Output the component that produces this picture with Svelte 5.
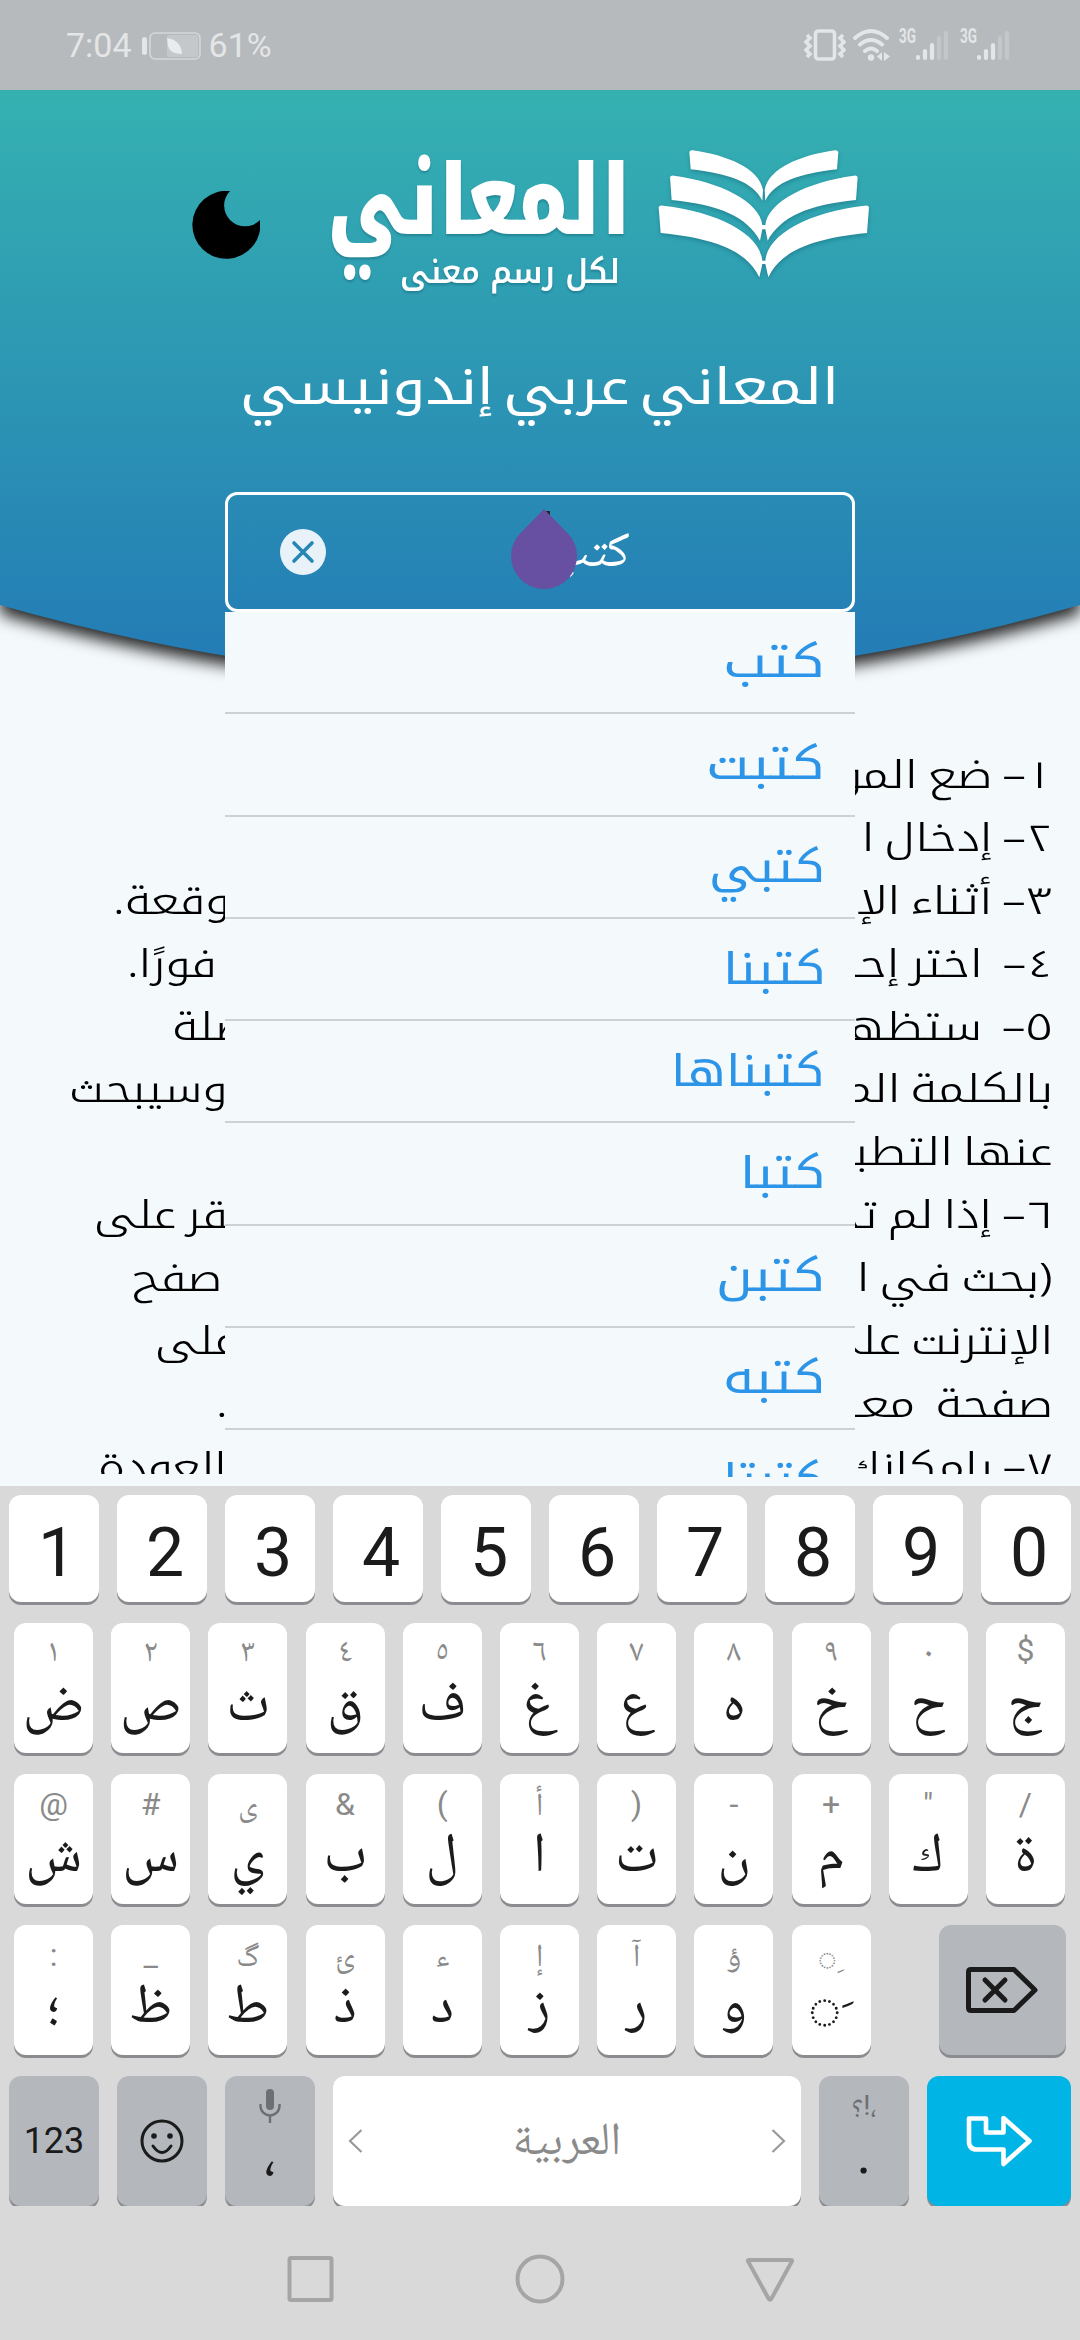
<script>
  const suggestions = [
    { word: 'كتب', width: 102 },
    { word: 'كتبت', width: 119 },
    { word: 'كتبي', width: 116 },
    { word: 'كتبنا', width: 102 },
    { word: 'كتبناها', width: 154 },
    { word: 'كتبا', width: 85 },
    { word: 'كتبن', width: 109 },
    { word: 'كتبه', width: 102 },
    { word: 'كتبتا', width: 102 },
  ];

  // start and end of each help line, the suggestions cover the middle
  const tips = [
    { start: '١– ضع المؤ' },
    { start: '٢– إدخال ا' },
    { start: '٣– أثناء الإد', end: 'وقعة.', left: 113 },
    { start: '٤–  اختر إحد', end: 'فورًا.', left: 127 },
    { start: '٥–  ستظهر', end: 'صلة', left: 172 },
    { start: 'بالكلمة المر', end: 'وسيبحث', left: 69 },
    { start: 'عنها التطبيق' },
    { start: '٦– إذا لم تجد', end: 'نقر على', left: 94 },
    { start: '(بحث في ا', end: 'صفح', left: 132 },
    { start: 'الإنترنت على', end: 'على', left: 155 },
    { start: 'صفحة  معا', end: '.', left: 216 },
    { start: '٧– بإمكانك', end: 'العودة', left: 98 },
  ];

  const digits = ['1', '2', '3', '4', '5', '6', '7', '8', '9', '0'];

  const rows = [
    [['١', 'ض'], ['٢', 'ص'], ['٣', 'ث'], ['٤', 'ق'], ['٥', 'ف'], ['٦', 'غ'], ['٧', 'ع'], ['٨', 'ە'], ['٩', 'خ'], ['٠', 'ح'], ['$', 'ج']],
    [['@', 'ش'], ['#', 'س'], ['ى', 'ي'], ['&', 'ب'], ['(', 'ل'], ['أ', 'ا'], [')', 'ت'], ['-', 'ن'], ['+', 'م'], ['"', 'ك'], ['/', 'ة']],
    [[':', '؛'], ['_', 'ظ'], ['گ', 'ط'], ['ئ', 'ذ'], ['ء', 'د'], ['إ', 'ز'], ['آ', 'ر'], ['ؤ', 'و']],
  ];

  // stretch a word to the given width
  function fit(node, width) {
    node.style.transform = `scaleX(${width / node.offsetWidth})`;
  }
</script>

{#snippet signal()}
  <svg class="signal" width="52" height="36" viewBox="0 0 52 36">
    <text x="0" y="16" font-size="20" font-weight="700" textLength="17" lengthAdjust="spacingAndGlyphs">3G</text>
    <g stroke-width="4.2" stroke-linecap="round">
      <path d="M19 30v1M26 24v7M33 18v13" />
      <path d="M40 11v20M47 6v25" opacity=".3" />
    </g>
  </svg>
{/snippet}

<div class="screen">
  <div class="status">
    <span>7:04</span>
    <svg class="battery" width="60" height="30" viewBox="0 0 60 30">
      <rect x="0" y="6" width="5" height="18" rx="2.5" fill="#e3e5e7" />
      <rect x="8" y="2" width="50" height="26" rx="5" fill="none" stroke="#d5d8da" stroke-width="1.6" />
      <rect x="25" y="4" width="31" height="22" rx="2" fill="#c4c8cb" />
      <path d="M25 7q14 2 15 16q-12 0-14-8z" fill="#e9ebec" />
    </svg>
    <span class="percent">61%</span>
    <div class="grow"></div>
    <svg class="vibrate" width="42" height="34" viewBox="0 0 42 34" fill="none" stroke="#e3e5e7">
      <rect x="11.500" y="3" width="19" height="28" rx="3" stroke-width="3.600" />
      <path d="M3 7l3 3-4 4 4 4-4 4 4 4-3 3M39 7l-3 3 4 4-4 4 4 4-4 4 3 3" stroke-width="3.600" />
    </svg>
    <svg class="wifi" width="38" height="34" viewBox="0 0 38 34" fill="none" stroke="#e3e5e7" stroke-width="4" stroke-linecap="round">
      <path d="M2 10q16-14 32 0M7 16.500q11-9 22 0M12 23q6-5 12 0" />
      <circle cx="18" cy="29.500" r="3.200" fill="#e3e5e7" stroke="none" />
      <path d="M29 24v9l-5-4.500zM31 24v9l6-4.500z" fill="#e3e5e7" stroke="none" />
    </svg>
    {@render signal()}
    {@render signal()}
  </div>

  <header>
    <svg class="backdrop" width="1080" height="620" viewBox="0 0 1080 620">
      <defs>
        <linearGradient id="sea" x1="0" y1="0" x2="0" y2="1">
          <stop offset="0" stop-color="#35b1b1" />
          <stop offset="1" stop-color="#237ab6" />
        </linearGradient>
      </defs>
      <path d="M0 0H1080V515Q540 669 0 515Z" fill="url(#sea)" />
    </svg>

    <div class="brand">
      <svg class="moon" width="68" height="68" viewBox="0 0 68 68">
        <path d="M38 0A34 34 0 1 0 68 29A20.500 20.500 0 0 1 38 0Z" />
      </svg>
      <svg class="wordmark" width="300" height="160" viewBox="0 0 300 160" fill="#fff" direction="rtl">
        <text x="303" y="94" font-size="97" font-weight="900" textLength="304" lengthAdjust="spacingAndGlyphs">المعاني</text>
        <text x="292" y="143" font-size="33" font-weight="600" textLength="220" lengthAdjust="spacingAndGlyphs">لكل رسم معنى</text>
      </svg>
      <svg class="book" width="250" height="170" viewBox="0 0 750 510" fill="#fff">
        <path id="half" d="M148 66Q150 60 158 61C260 75 358 115 369 180L367 212C340 155 260 130 152 118ZM90 142Q92 135 102 137C240 155 360 215 367 285H372V298H367L360 332C320 260 240 225 95 210ZM56 232Q58 224 70 227C230 245 360 310 367 392H372V402H367L358 442C320 360 220 325 62 309Z" />
        <use href="#half" transform="matrix(-1 0 0 1 743 0)" />
      </svg>
    </div>

    <h1><span use:fit={599}>المعاني عربي إندونيسي</span></h1>

    <div class="search">
      <svg class="clear" width="46" height="46" viewBox="0 0 46 46">
        <circle cx="23" cy="23" r="23" fill="#e9f2f9" />
        <path d="M14 14L32 32M32 14L14 32" stroke="#2787b4" stroke-width="3.600" stroke-linecap="round" />
      </svg>
      <span class="query">كتب</span>
      <svg class="handle" width="66" height="80" viewBox="0 0 66 80">
        <path d="M35 2h4v10h-4z" fill="#222" />
        <path d="M33 0L56.300 23.700A33 33 0 1 1 9.700 23.700Z" fill="#6750a1" />
      </svg>
      <ul class="menu">
        {#each suggestions as item}
          <li><span use:fit={item.width}>{item.word}</span></li>
        {/each}
      </ul>
    </div>
  </header>

  <div class="tips">
    {#each tips as tip}
      <p>
        <span class="start">{tip.start}</span>
        {#if tip.end}
          <span class="end" style="margin-left: {tip.left}px">{tip.end}</span>
        {/if}
      </p>
    {/each}
  </div>

  <div class="keyboard">
    <div class="row digits">
      {#each digits as digit}
        <div class="key">{digit}</div>
      {/each}
    </div>
    {#each rows as row, i}
      <div class="row letters" class:raised={i === 0}>
        {#each row as [hint, letter]}
          <div class="key"><small>{hint}</small><b>{letter}</b></div>
        {/each}
        {#if i === 2}
          <div class="key vowel"><small>&#x25CC;<i>&nbsp;&#x650;</i></small><b>&#x25CC;<i>&nbsp;&#x64E;</i></b></div>
          <div class="key gray backspace">
            <svg width="72" height="46" viewBox="0 0 72 46" fill="none" stroke="#1b1b1b" stroke-width="5" stroke-linecap="round" stroke-linejoin="round">
              <path d="M5 2.500H48L69 23L48 43.500H5Q2.500 43.500 2.500 41V5Q2.500 2.500 5 2.500Z" />
              <path d="M19 13L39 33M39 13L19 33" />
            </svg>
          </div>
        {/if}
      </div>
    {/each}
    <div class="row bottom">
      <div class="key gray mode">123</div>
      <div class="key gray">
        <svg width="44" height="44" viewBox="0 0 44 44" fill="none" stroke="#1b1b1b" stroke-width="3" stroke-linecap="round">
          <circle cx="22" cy="22" r="20" />
          <path d="M13 27Q22 40 31 27" />
          <circle cx="14" cy="17" r="2.800" fill="#1b1b1b" stroke="none" />
          <circle cx="30" cy="17" r="2.800" fill="#1b1b1b" stroke="none" />
        </svg>
      </div>
      <div class="key gray punctuation">
        <svg width="22" height="34" viewBox="0 0 22 34" fill="none" stroke="#6d6f73" stroke-width="2.400">
          <rect x="7" y="0" width="8" height="21" rx="4" fill="#6d6f73" stroke="none" />
          <path d="M1.500 15v2a9.500 9.500 0 0 0 19 0v-2M11 27v7" />
        </svg>
        <b>،</b>
      </div>
      <div class="key space">
        <svg width="15" height="24" viewBox="0 0 15 24"><path d="M13.500 1L2 12L13.500 23" /></svg>
        <span>العربية</span>
        <svg width="15" height="24" viewBox="0 0 15 24"><path d="M1.500 1L13 12L1.500 23" /></svg>
      </div>
      <div class="key gray punctuation"><small dir="rtl">،!؟</small><b>.</b></div>
      <div class="key enter">
        <svg width="66" height="52" viewBox="0 0 66 52" fill="none" stroke="#fff" stroke-width="4.600" stroke-linejoin="round">
          <path d="M3 3.500H20V17.500H37.500V3L63.500 26L37.500 49V34.500H11Q3 34.500 3 26.500Z" />
        </svg>
      </div>
    </div>
  </div>

  <nav>
    <svg width="50" height="50" viewBox="0 0 50 50"><rect x="4.500" y="4" width="42" height="42" rx="1.500" /></svg>
    <svg width="50" height="50" viewBox="0 0 50 50"><circle cx="25" cy="25" r="22.500" /></svg>
    <svg width="50" height="50" viewBox="0 0 50 50"><path d="M4 6H46Q48 6 46.500 8L26.500 44.500Q25 47 23.500 44.500L3.500 8Q2 6 4 6Z" /></svg>
  </nav>
</div>

<style>
  .screen {
    width: 1080px;
    height: 2340px;
    overflow: hidden;
    display: flex;
    flex-direction: column;
    background: #f4f9fc;
    font-family: "Noto Kufi Arabic", sans-serif;
  }

  .status {
    height: 90px;
    box-sizing: border-box;
    padding: 0 66px 0 66px;
    display: flex;
    align-items: center;
    background: #b6babd;
    color: #e3e5e7;
    font: 34px Roboto, sans-serif;
  }
  .battery {
    margin: 2px 0 0 10px;
  }
  .percent {
    margin-left: 7px;
  }
  .grow {
    flex: 1;
  }
  .wifi {
    margin: 0 8px 0 7px;
  }
  .signal {
    fill: #e3e5e7;
    stroke: #e3e5e7;
    margin-right: 9px;
    overflow: visible;
  }
  .signal:last-child {
    margin-right: 2px;
  }
  .signal text {
    stroke: none;
  }

  header {
    position: relative;
    height: 592px;
    display: flex;
    flex-direction: column;
    align-items: center;
  }
  .backdrop {
    position: absolute;
    top: 0;
    left: 0;
    overflow: visible;
    filter: drop-shadow(0 9px 8px rgba(0, 0, 0, .85));
    clip-path: inset(0 0 -40px 0);
  }

  .brand {
    position: relative;
    width: 1080px;
    height: 250px;
    display: flex;
  }
  .moon {
    margin: 101px 68px 0 192px;
  }
  .wordmark {
    margin-top: 50px;
    overflow: visible;
    filter: drop-shadow(0 2px 1px rgba(0, 60, 80, .3));
  }
  .book {
    margin: 40px 0 0 12px;
    filter: drop-shadow(0 2px 2px rgba(0, 60, 80, .3));
  }

  h1 {
    position: relative;
    margin: 0;
    height: 152px;
    line-height: 96px;
    font-size: 50px;
    font-weight: 400;
    word-spacing: -9px;
    color: #fff;
  }
  h1 span {
    display: inline-block;
  }

  .search {
    position: relative;
    box-sizing: border-box;
    width: 630px;
    height: 120px;
    border: 3px solid #fff;
    border-radius: 12px;
    display: flex;
    align-items: center;
    justify-content: center;
  }
  .clear {
    position: absolute;
    left: 52px;
  }
  .query {
    font: 50px/60px "Noto Naskh Arabic", serif;
    color: #fff;
    margin: 8px 0 0 100px;
  }
  .handle {
    position: absolute;
    left: 283px;
    top: 14px;
  }

  .menu {
    position: absolute;
    top: 117px;
    left: -3px;
    width: 630px;
    height: 865px;
    overflow: hidden;
    margin: 0;
    padding: 0;
    list-style: none;
    background: #f4f9fc;
    direction: rtl;
    z-index: 2;
  }
  .menu li {
    height: 102.3px;
    box-sizing: border-box;
    border-bottom: 2px solid #cdd2d5;
    padding-right: 30px;
    line-height: 102px;
    font-size: 44px;
    color: #2d95e8;
  }
  .menu span {
    display: inline-block;
    transform-origin: right;
  }

  .tips {
    direction: rtl;
    height: 730px;
    margin-top: 62px;
    overflow: hidden;
    flex: none;
    color: #000;
    font-size: 38px;
    font-weight: 300;
    word-spacing: -5px;
  }
  .tips p {
    margin: 0;
    height: 62.900px;
    line-height: 62.900px;
    display: flex;
    justify-content: space-between;
    padding-right: 27px;
    white-space: pre;
  }
  .start {
    transform: scaleX(1.25);
    transform-origin: right;
  }
  .end {
    transform: scaleX(1.22);
    transform-origin: left;
  }

  .keyboard {
    margin-top: 12px;
    flex: none;
    background: #d9d9d9;
    padding-top: 9px;
    display: flex;
    flex-direction: column;
    gap: 21px;
    font-family: Roboto, "Noto Naskh Arabic", sans-serif;
    color: #1b1b1b;
  }
  .row {
    display: flex;
    gap: 18px;
    padding: 0 9px;
  }
  .letters {
    padding: 0 14px;
    gap: 18.200px;
  }
  .key {
    width: 79px;
    height: 130px;
    flex: none;
    border-radius: 12px;
    background: #fff;
    box-shadow: 0 3px #8a8c90;
    display: flex;
    flex-direction: column;
    align-items: center;
  }
  .digits .key {
    width: 90px;
    height: 107px;
    box-sizing: border-box;
    padding-left: 6px;
    font-size: 68px;
    line-height: 116px;
  }
  .key small {
    height: 60px;
    font-size: 32px;
    line-height: 60px;
    color: #8a8a8a;
  }
  .raised small {
    line-height: 54px;
  }
  .key b {
    font-size: 56px;
    line-height: 36px;
    font-weight: 400;
  }
  .vowel i {
    font-style: normal;
  }
  .key.gray {
    background: #b4b8bd;
  }
  .key.backspace {
    width: 127.500px;
    margin-left: auto;
    justify-content: center;
  }
  .bottom .key {
    width: 90px;
    justify-content: center;
  }
  .key.mode {
    font-size: 36px;
  }
  .bottom .punctuation {
    justify-content: flex-start;
  }
  .punctuation svg {
    margin: 13px 0 13px;
  }
  .bottom .key small {
    color: #6d6f73;
    font-size: 28px;
  }
  .bottom .space {
    width: 468px;
    box-sizing: border-box;
    padding: 0 15px;
    flex-direction: row;
    align-items: center;
    justify-content: space-between;
    font-size: 46px;
    color: #8a8a8a;
  }
  .space span {
    line-height: 50px;
    margin-bottom: 6px;
  }
  .space path {
    fill: none;
    stroke: #9a9a9a;
    stroke-width: 2.200;
  }
  .bottom .enter {
    width: 144px;
    background: #00b5e5;
  }

  nav {
    flex: 1;
    background: #d9d9d9;
    display: flex;
    justify-content: center;
    gap: 180px;
    padding-top: 48px;
  }
  nav svg {
    fill: none;
    stroke: #a5a5a5;
    stroke-width: 4;
  }
</style>
